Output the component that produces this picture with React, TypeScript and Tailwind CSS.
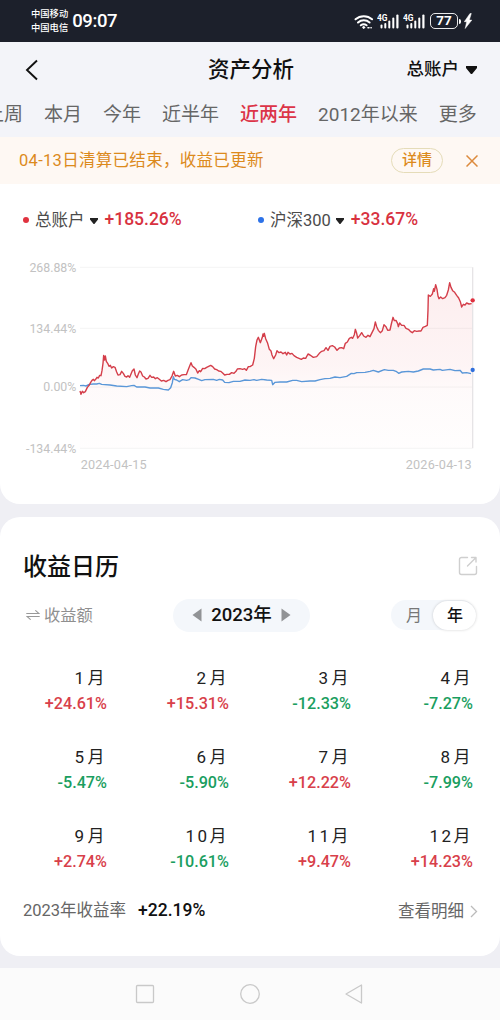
import { FaCaretDown } from "react-icons/fa";

const TABS = ["上周", "本月", "今年", "近半年", "近两年", "2012年以来", "更多"];

const MONTHS = [
  "+24.61%", "+15.31%", "-12.33%", "-7.27%",
  "-5.47%", "-5.90%", "+12.22%", "-7.99%",
  "+2.74%", "-10.61%", "+9.47%", "+14.23%",
];

// chart units are a third of a pixel
const ACCOUNT =
  "240,423 243,433 247,424 251,428 256,425 262,412 268,405 272,397 276,391 280,388 283,392 287,388 291,382 295,384 299,376 303,377 306,362 309,340 311,316 314,330 316,318 319,334 323,340 327,349 331,346 335,354 340,350 345,352 350,366 354,375 360,374 365,364 370,370 375,379 380,381 384,377 389,382 393,372 397,362 402,357 406,375 411,383 415,372 419,363 423,366 428,378 433,381 438,387 444,385 450,376 455,382 461,381 466,386 472,383 478,388 484,393 491,391 498,395 504,391 510,389 516,378 521,364 526,378 532,376 538,380 545,375 552,374 559,374 564,361 569,348 573,338 577,348 582,352 588,358 593,369 598,362 602,365 608,355 614,356 620,352 626,349 632,346 638,350 644,357 650,359 656,363 662,364 668,369 674,375 681,373 688,373 695,368 702,370 708,364 712,357 720,356 728,358 734,356 739,361 745,350 750,350 " +
  "758,345 763,325 767,290 771,270 775,262 781,278 787,262 789,252 791,259 793,250 797,266 803,280 808,298 813,303 816,315 821,326 827,315 831,302 837,308 843,306 849,311 856,307 860,315 864,307 870,312 876,310 882,317 890,322 897,325 904,328 910,324 917,325 924,312 930,315 940,322 950,320 958,310 965,304 972,302 978,293 984,301 990,289 997,287 1004,291 1011,301 1018,294 1025,293 1031,296 1036,280 1042,276 1048,265 1054,262 1058,265 1063,254 1066,238 1070,250 1073,264 1079,257 1085,248 1091,258 1098,262 1104,256 1110,260 1116,248 1122,236 1126,216 1130,230 1135,241 1141,248 1147,242 1152,224 1158,230 1163,241 1170,240 1174,222 1179,202 1183,212 1188,211 1193,221 1195,230 1199,219 1205,226 1212,226 1218,235 1225,238 1231,244 1237,248 1243,242 1250,244 1257,243 1263,243 1269,232 1276,229 1282,226 1284,180 1285,135 1291,139 1297,132 1301,116 1303,124 1307,104 1311,118 1314,138 1317,146 1322,141 1328,146 1335,143 1340,136 1345,120 1349,98 1353,112 1358,122 1364,127 1370,136 1376,144 1381,155 1385,171 1390,163 1395,165 1400,159 1407,162 1415,161";

const INDEX =
  "240,407 250,406 258,408 268,403 280,402 290,402 298,400 305,403 330,405 350,408 380,410 395,407 402,406 410,411 435,411 450,414 475,414 490,418 505,420 512,413 517,398 520,380 523,388 530,390 538,395 548,389 560,391 568,389 573,383 585,384 596,388 605,392 615,389 640,388 650,391 658,388 668,390 674,397 687,398 700,394 720,394 735,390 750,391 " +
  "762,389 770,391 785,388 800,390 815,391 818,404 825,397 840,396 860,396 878,391 890,391 905,395 930,393 945,393 960,389 975,386 990,385 1005,381 1020,383 1040,379 1054,370 1062,371 1070,368 1095,367 1110,364 1120,361 1135,366 1153,359 1165,361 1180,361 1190,365 1196,370 1205,366 1225,364 1240,366 1255,363 1270,357 1290,357 1300,360 1320,358 1327,361 1350,358 1365,362 1380,361 1387,369 1400,368 1413,371";

const GRID = [
  { y: 52, label: "268.88%" },
  { y: 235, label: "134.44%" },
  { y: 411, label: "0.00%" },
  { y: 595, label: "-134.44%" },
];

function Signal() {
  return (
    <svg width="23" height="17" viewBox="0 0 23 17" fill="#fff">
      <text x="0" y="8" fontSize="9" fontWeight="700" textLength="10.5" lengthAdjust="spacingAndGlyphs">4G</text>
      <rect x="3.5" y="11.5" width="2" height="4" rx="1" />
      <rect x="7.3" y="10" width="2" height="5.5" rx="1" />
      <rect x="11.3" y="7.5" width="2" height="8" rx="1" />
      <rect x="15.3" y="4.5" width="2" height="11" rx="1" />
      <rect x="19.3" y="1.5" width="2.2" height="14" rx="1" />
    </svg>
  );
}

function StatusBar() {
  return (
    <div className="flex h-[42px] shrink-0 items-center bg-[#1c202b] pl-[31px] pr-[28px] text-white">
      <div className="text-[9.3px] font-medium leading-[14px]">
        <div>中国移动</div>
        <div>中国电信</div>
      </div>
      <span className="ml-[4px] text-[18.5px] font-medium leading-none tracking-[-0.4px]">09:07</span>
      <div className="ml-auto flex items-center">
        <svg width="20" height="17" viewBox="0 0 20 17" fill="none" stroke="#fff" strokeWidth="2" strokeLinecap="round">
          <path d="M1.5 6.3a12.5 12.5 0 0 1 16.6 0M4 9.5a8.800 8.800 0 0 1 11.600 0M6.800 12.300a5 5 0 0 1 5.800 0" />
          <circle cx="9.7" cy="14.4" r="1" fill="#fff" strokeWidth="1" />
          <path d="M14 14.7h3.2" strokeWidth="1.6" strokeDasharray="1 2" />
        </svg>
        <span className="ml-[3px]"><Signal /></span>
        <span className="ml-[3px]"><Signal /></span>
        <span className="ml-[4px] flex h-[16px] w-[28px] items-center justify-center rounded-[5px] border-[1.5px] border-white/90 text-[13.5px] font-bold leading-none">77</span>
        <span className="ml-px h-[5px] w-[2px] rounded-r bg-white" />
        <svg className="ml-[3px]" width="8" height="16" viewBox="0 0 8 16" fill="#fff">
          <path d="M6 .5.3 8.700h2.400L1.200 15.500 7.800 7.100H5.300L7.300.5Z" stroke="#fff" strokeWidth=".5" />
        </svg>
      </div>
    </div>
  );
}

function Caret({ className }: { className: string }) {
  return <FaCaretDown className={className} viewBox="24 190 272 166" preserveAspectRatio="none" />;
}

function Legend({ name, value, color }: { name: string; value: string; color: string }) {
  return (
    <div className="flex items-center leading-none">
      <span className={`mr-[6px] h-[6px] w-[6px] rounded-full ${color}`} />
      <span className="pt-[3px] text-[16.5px] text-[#4b4b4b]">{name}</span>
      <Caret className="ml-[5px] mt-[2px] h-[6px] w-[8px] text-[#222]" />
      <span className="ml-[7px] text-[17.5px] font-medium text-[#d8323f]">{value}</span>
    </div>
  );
}

function Chart() {
  return (
    <svg className="block" width="500" height="240" viewBox="0 0 1500 720">
      <defs>
        <linearGradient id="fill" gradientUnits="userSpaceOnUse" x1="0" y1="98" x2="0" y2="595">
          <stop offset="0" stopColor="#e53e48" stopOpacity="0.09" />
          <stop offset="0.5" stopColor="#e53e48" stopOpacity="0.055" />
          <stop offset="0.65" stopColor="#e53e48" stopOpacity="0.025" />
          <stop offset="1" stopColor="#e53e48" stopOpacity="0.008" />
        </linearGradient>
      </defs>
      {GRID.map((g) => (
        <g key={g.label}>
          <line x1="240" x2="1417" y1={g.y} y2={g.y} stroke="#f4f4f4" strokeWidth="3" />
          <text x="229" y={g.y + 13} fontSize="37" textAnchor="end" fill="#c2c2c2">{g.label}</text>
        </g>
      ))}
      <polygon points={`${ACCOUNT} 1417,161 1417,595 240,595`} fill="url(#fill)" />
      <line x1="1418" x2="1418" y1="52" y2="595" stroke="#e6e4e6" strokeWidth="4" />
      <polyline points={INDEX} fill="none" stroke="#5a97d8" strokeWidth="4.2" strokeLinejoin="round" />
      <polyline points={ACCOUNT} fill="none" stroke="#d43e4a" strokeWidth="4.2" strokeLinejoin="round" />
      <circle cx="1418" cy="151" r="6.500" fill="#e0303f" />
      <circle cx="1418" cy="360" r="6.500" fill="#2f6fdc" />
      <text x="242" y="658" fontSize="38" textLength="198" fill="#c2c2c2">2024-04-15</text>
      <text x="1217" y="658" fontSize="38" textLength="198" fill="#c2c2c2">2026-04-13</text>
    </svg>
  );
}

function Calendar() {
  return (
    <section className="mt-[13px] h-[439px] shrink-0 rounded-[20px] bg-white">
      <div className="flex h-[98px] items-center justify-between pl-[23px] pr-[22px]">
        <h2 className="pt-px text-[24px] font-medium leading-none text-[#111]">收益日历</h2>
        <svg width="20" height="20" viewBox="0 0 20 20" fill="none" stroke="#cfcfcf" strokeWidth="1.4" strokeLinecap="round" strokeLinejoin="round">
          <path d="M9.500 1.500H3.500A2 2 0 0 0 1.500 3.500v13a2 2 0 0 0 2 2h13a2 2 0 0 0 2-2v-6M13.500 1.500h4.500V6M17.800 1.700l-8.300 8.300" />
        </svg>
      </div>
      <div className="-mt-[17px] grid h-[34px] grid-cols-[173px_137px_1fr] items-center">
        <div className="flex items-center pl-[26px] text-[16.3px] leading-none text-[#8f8f8f]">
          <svg className="mr-[4px]" width="14" height="10" viewBox="0 0 14 10" fill="none" stroke="#999" strokeWidth="1.1" strokeLinecap="round">
            <path d="M.7 3.500h12.300L9.700.7M13.300 6.500H1L4.300 9.300" />
          </svg>
          <span className="pt-[2px]">收益额</span>
        </div>
        <div className="flex h-[33px] items-center justify-center gap-[9px] rounded-full bg-[#f4f7fb]">
          <svg width="10" height="14" viewBox="0 0 10 14" fill="#919396"><path d="M9.500.5v13L.5 7Z" /></svg>
          <span className="text-[18.5px] font-medium leading-none text-[#111]">2023年</span>
          <svg width="10" height="14" viewBox="0 0 10 14" fill="#919396"><path d="M.5.5v13l9-6.500Z" /></svg>
        </div>
        <div className="ml-auto mr-[24px] flex h-[30px] w-[85px] items-center rounded-full bg-[#f4f7fb] text-center text-[16px] leading-[29px]">
          <span className="w-[42px] pl-[4px] text-[#777]">月</span>
          <span className="h-[29px] w-[43px] rounded-full bg-white pl-px font-medium text-[#111] shadow-[0_0_3px_rgba(0,0,0,0.18)]">年</span>
        </div>
      </div>
      <div className="mt-[35px] grid auto-rows-[79px] grid-cols-[107px_122px_122px_122px] text-right">
        {MONTHS.map((value, i) => (
          <div key={i}>
            <div className="h-[22px] text-[17px] leading-[22px] tracking-[2.500px] text-[#222]">
              <span>{i + 1}</span>
              <span className={i < 9 ? "ml-px" : ""}>月</span>
            </div>
            <div className={`mt-[4px] h-[22px] text-[16.2px] font-medium leading-[22px] ${value[0] === "+" ? "text-[#d8404a]" : "text-[#1a9e60]"}`}>{value}</div>
          </div>
        ))}
      </div>
      <div className="-mt-[5px] flex h-[24px] items-center pl-[23px] pr-[22px] text-[16.500px] leading-none text-[#666]">
        <span className="pt-px">2023年收益率</span>
        <span className="-mt-px ml-[12px] text-[17.500px] font-medium text-[#111]">+22.19%</span>
        <span className="ml-auto pt-[2px]">查看明细</span>
        <svg className="ml-[6px]" width="8" height="13" viewBox="0 0 8 13" fill="none" stroke="#bbb" strokeWidth="1.300"><path d="m1 1 5.500 5.500L1 12" /></svg>
      </div>
    </section>
  );
}

export default function App() {
  return (
    <div className="flex h-[1020px] w-[500px] flex-col overflow-hidden bg-[#efeff4] font-[Roboto,'Noto_Sans_CJK_SC',sans-serif]">
      <StatusBar />

      {/* Title */}
      <header className="grid h-[55px] shrink-0 grid-cols-3 items-center bg-[#f3f4f9] pl-[25px] pr-[23px] text-[#111]">
        <svg width="14" height="22" viewBox="0 0 14 22" fill="none" stroke="#111" strokeWidth="1.900"><path d="M12 1.500 2 11l10 9.500" /></svg>
        <h1 className="text-center text-[21.500px] font-medium leading-none">资产分析</h1>
        <div className="flex items-center justify-end text-[17.500px] font-medium leading-none">
          <span className="pt-px">总账户</span>
          <Caret className="ml-[7px] mt-px h-[8px] w-[11px]" />
        </div>
      </header>

      {/* Period tabs */}
      <nav className="flex h-[40px] shrink-0 items-start gap-[21px] bg-[#f3f4f9] pt-[8px]">
        {TABS.map((t, i) => (
          <span key={t} className={`shrink-0 text-[19px] leading-[20px] first:-ml-[15px] ${i === 4 ? "font-medium text-[#dc3448]" : "text-[#666]"}`}>{t}</span>
        ))}
      </nav>

      {/* Notice */}
      <div className="flex h-[47px] shrink-0 items-center bg-[#fef8f3] pl-[19px] pr-[22px] text-[#dc8a1c]">
        <span className="pt-px text-[16.500px] leading-none tracking-[0.3px]">04-13日清算已结束，收益已更新</span>
        <span className="ml-auto flex h-[25px] w-[52px] items-center justify-center rounded-full border border-[#e5dcb8] text-[15px] font-medium leading-none">详情</span>
        <svg className="ml-[23px]" width="12" height="12" viewBox="0 0 12 12" stroke="#dc8a3c" strokeWidth="1.500"><path d="m.5.5 11 11M11.500.5l-11 11" /></svg>
      </div>

      <section className="h-[320px] shrink-0 rounded-b-[20px] bg-white">
        <div className="grid h-[66px] grid-cols-[235px_1fr] items-center pl-[23px] pt-[5px]">
          <Legend name="总账户" value="+185.26%" color="bg-[#e0323f]" />
          <Legend name="沪深300" value="+33.67%" color="bg-[#2d72e8]" />
        </div>
        <Chart />
      </section>

      <Calendar />

      {/* System navigation */}
      <footer className="mt-auto flex h-[52px] shrink-0 items-center justify-center gap-[85px] bg-[#fbfbfb]">
        <svg width="20" height="20" viewBox="0 0 20 20" fill="none" stroke="#c9c9c9" strokeWidth="1.300"><rect x="1.500" y="1.500" width="17" height="17" rx="1" /></svg>
        <svg width="20" height="20" viewBox="0 0 20 20" fill="none" stroke="#c9c9c9" strokeWidth="1.300"><circle cx="10" cy="10" r="9.300" /></svg>
        <svg width="20" height="20" viewBox="0 0 20 20" fill="none" stroke="#c9c9c9" strokeWidth="1.300" strokeLinejoin="round"><path d="M16.500 1v18L1 10Z" /></svg>
      </footer>
    </div>
  );
}
